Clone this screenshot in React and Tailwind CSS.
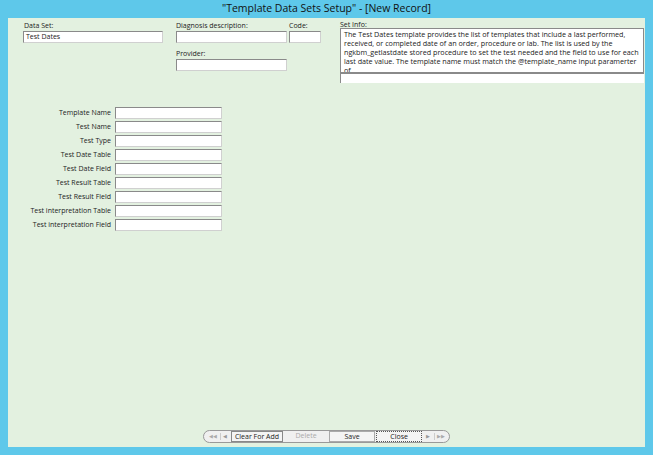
export default function App() {
  const rows = ["Template Name","Test Name","Test Type","Test Date Table","Test Date Field","Test Result Table","Test Result Field","Test interpretation Table","Test interpretation Field"];
  const inp = "bg-white border border-[#8a8a8a] border-b-[#d0d0d0] border-r-[#d0d0d0]";
  return (
    <div className="w-[653px] h-[455px] bg-[#5ec8ea] flex flex-col text-[7px] text-[#222]" style={{fontFamily:'"Open Sans","Liberation Sans",sans-serif'}}>
      <div className="h-[18px] flex items-center justify-center text-[10.5px] text-[#111]">"Template Data Sets Setup" - [New Record]</div>
      <div className="mx-[8px] mb-[8px] flex-1 bg-[#e3f1e0] flex flex-col">
        <div className="flex pt-[3px]">
          <div className="ml-[15px] w-[140px] flex flex-col">
            <div className="h-[10px] leading-[10px] ml-px">Data Set:</div>
            <div className={`${inp} h-[12px] leading-[10px] px-[2px]`}>Test Dates</div>
          </div>
          <div className="ml-[13px] flex flex-col">
            <div className="flex">
              <div className="w-[113px] flex flex-col">
                <div className="h-[10px] leading-[10px]">Diagnosis description:</div>
                <div className={`${inp} h-[12px] w-[111px]`}></div>
              </div>
              <div className="w-[32px] flex flex-col">
                <div className="h-[10px] leading-[10px]">Code:</div>
                <div className={`${inp} h-[12px]`}></div>
              </div>
            </div>
            <div className="h-[10px] leading-[10px] mt-[6px]">Provider:</div>
            <div className={`${inp} h-[12px] w-[111px]`}></div>
          </div>
          <div className="ml-[19px] flex flex-col w-[304px]">
            <div className="h-[10px] leading-[10px] -mt-[1px]">Set Info:</div>
            <div className="bg-white border border-[#8a8a8a] h-[45px] px-[3px] pt-px leading-[9px] overflow-hidden text-[7.2px] -mt-[2px]">
              The Test Dates template provides the list of templates that include a last performed, received, or completed date of an order, procedure or lab. The list is used by the ngkbm_getlastdate stored procedure to set the test needed and the field to use for each last date value. The template name must match the @template_name input paramerter of
            </div>
            <div className="bg-white border-l border-t border-[#8a8a8a] h-[10px]"></div>
          </div>
        </div>
        <div className="flex flex-col mt-[24px] gap-[2px]">
          {rows.map(r => (
            <div key={r} className="flex items-center h-[12px]">
              <div className="w-[107px] text-right pr-[4px] leading-[12px]">{r}</div>
              <div className={`${inp} h-[12px] w-[107px]`}></div>
            </div>
          ))}
        </div>
        <div className="flex-1"></div>
        <div className="flex justify-center mb-[4px]">
          <div className="flex items-center h-[13px] border border-[#999] rounded-full bg-[#f0f0f0] px-[3px] gap-[1px] text-[7px]">
            <span className="w-[12px] text-center text-[#aaa] text-[5px]">◀◀</span>
            <span className="w-[10px] text-center text-[#999] text-[5px] border-l border-[#ccc]">◀</span>
            <span className="h-[11px] px-[3px] border border-[#888] bg-[#f4f4f4] leading-[9px]">Clear For Add</span>
            <span className="w-[44px] text-center text-[#aaa]">Delete</span>
            <span className="w-[46px] h-[11px] text-center border border-[#aaa] leading-[9px] bg-[#f4f4f4]">Save</span>
            <span className="w-[46px] h-[11px] text-center border border-[#555] border-dotted leading-[9px] bg-[#f4f4f4]">Close</span>
            <span className="w-[10px] text-center text-[#999] text-[5px]">▶</span>
            <span className="w-[12px] text-center text-[#aaa] text-[5px] border-l border-[#ccc]">▶▶</span>
          </div>
        </div>
      </div>
    </div>
  );
}
